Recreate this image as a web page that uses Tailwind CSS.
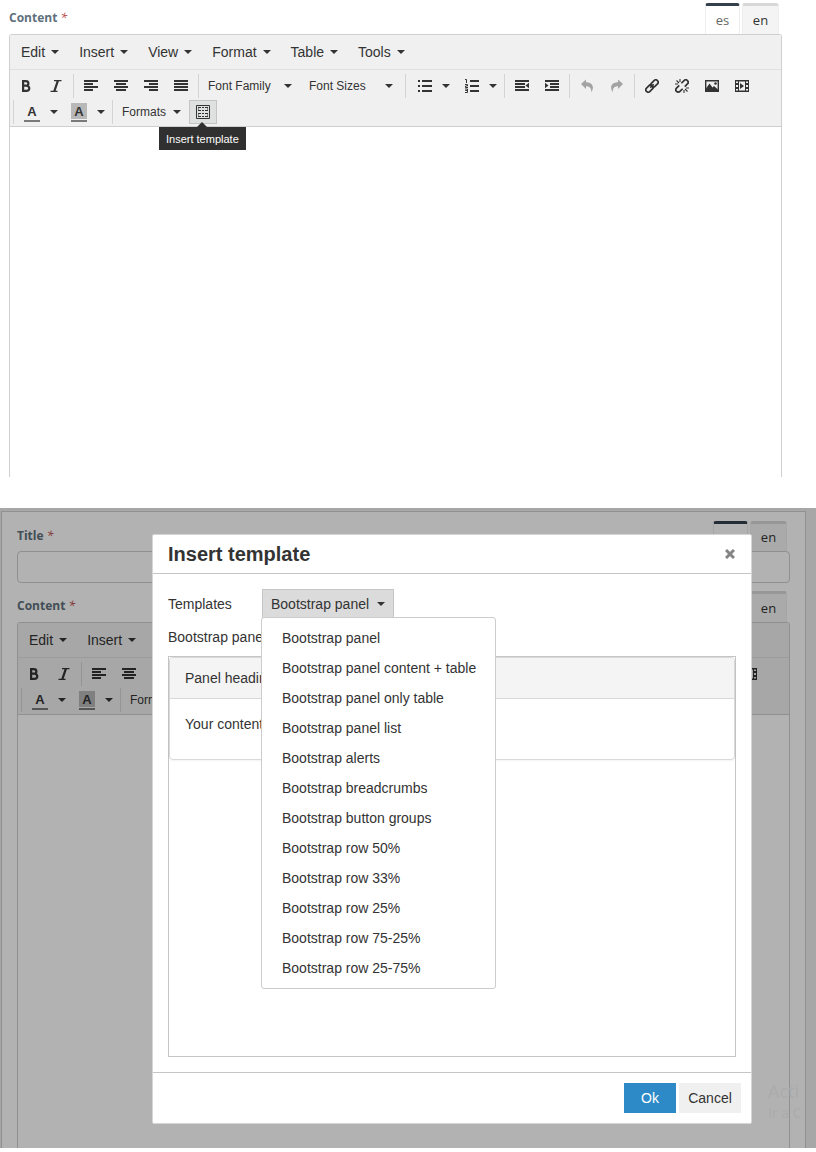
<!DOCTYPE html>
<html lang="en">
<head>
<meta charset="utf-8">
<meta name="viewport" content="width=device-width, initial-scale=1">
<title>Insert template</title>
<script src="https://cdn.jsdelivr.net/npm/@tailwindcss/browser@4"></script>
</head>
<body class="bg-white font-['Liberation_Sans',Arial,sans-serif] text-sm text-[#333333]">

<svg class="hidden" aria-hidden="true">
  <symbol id="caret" viewBox="0 0 8 4"><path d="M0 0h8L4 4z" fill="currentColor"/></symbol>
  <symbol id="bold" viewBox="0 0 14 14"><path fill="none" stroke="currentColor" stroke-width="2.2" d="M4.1 2.1h2.6c3.6 0 3.6 4.600 0 4.600H4.100h3.200c4 0 4 5.200 0 5.200H4.100z"/></symbol>
  <symbol id="italic" viewBox="0 0 14 14"><path fill="none" stroke="currentColor" stroke-width="1.300" d="M5 1.700h7.500M1.500 12.300h7"/><path fill="none" stroke="currentColor" stroke-width="2.200" d="M8.900 1.700 5.300 12.300"/></symbol>
  <symbol id="left" viewBox="0 0 14 14"><path fill="currentColor" d="M0 1h14v2H0zM0 4h9v2H0zM0 7h14v2H0zM0 10h9v2H0z"/></symbol>
  <symbol id="center" viewBox="0 0 14 14"><path fill="currentColor" d="M0 1h14v2H0zM2 4h10v2H2zM0 7h14v2H0zM2 10h10v2H2z"/></symbol>
  <symbol id="right" viewBox="0 0 14 14"><path fill="currentColor" d="M0 1h14v2H0zM5 4h9v2H5zM0 7h14v2H0zM5 10h9v2H5z"/></symbol>
  <symbol id="justify" viewBox="0 0 14 14"><path fill="currentColor" d="M0 1h14v2H0zM0 4h14v2H0zM0 7h14v2H0zM0 10h14v2H0z"/></symbol>
  <symbol id="bullets" viewBox="0 0 14 14"><path fill="currentColor" d="M0 1h2v2H0zM4 1h10v2H4zM0 6h2v2H0zM4 6h10v2H4zM0 11h2v2H0zM4 11h10v2H4z"/></symbol>
  <symbol id="numbers" viewBox="0 0 14 14"><path fill="currentColor" d="M5 1h9v2H5zM5 6h9v2H5zM5 11h9v2H5z"/><path fill="none" stroke="currentColor" d="M0 .5h1.500v3.500M0 5.500h2.500v1.500h-2v1.500H3M0 10h2.500v1.500H.5h2v2H0"/></symbol>
  <symbol id="outdent" viewBox="0 0 14 14"><path fill="currentColor" d="M0 1h14v2H0zM0 4h10v2H0zM0 7h10v2H0zM0 10h14v2H0zM14 3.700v5.600L10.500 6.500z"/></symbol>
  <symbol id="indent" viewBox="0 0 14 14"><path fill="currentColor" d="M0 1h14v2H0zM5 4h9v2H5zM5 7h9v2H5zM0 10h14v2H0zM0 3.700v5.600L3.500 6.500z"/></symbol>
  <symbol id="undo" viewBox="0 0 14 14"><path fill="currentColor" d="M1 5 6 .5v2.700c6 0 9 4.300 5.300 10.300C11.500 9.500 10 7.400 6 7.300v2.700z"/></symbol>
  <symbol id="redo" viewBox="0 0 14 14"><path fill="currentColor" d="M13 5 8 .5v2.700c-6 0-9 4.300-5.300 10.300C2.500 9.500 4 7.400 8 7.300v2.700z"/></symbol>
  <symbol id="link" viewBox="0 0 14 14"><g fill="none" stroke="currentColor" stroke-width="1.700" transform="rotate(-45 7 7)"><rect x="-.7" y="4.600" width="8.300" height="4.800" rx="2.400"/><rect x="6.400" y="4.600" width="8.300" height="4.800" rx="2.400"/><path d="M4.500 7h5" stroke-width="1.300"/></g></symbol>
  <symbol id="unlink" viewBox="0 0 14 14"><g fill="none" stroke="currentColor" stroke-width="1.700"><path transform="rotate(-45 7 7)" d="M5.500 9.400H1.700a2.400 2.400 0 0 1 0-4.800h3.800M8.500 4.600h3.800a2.400 2.400 0 0 1 0 4.800H8.500"/><path stroke-width="1.100" d="M5 0v3M1.500 1.500l2.500 2.500M0 5h3M9 11v3M12.500 12.500 10 10M11 9h3"/></g></symbol>
  <symbol id="image" viewBox="0 0 14 14"><path fill="none" stroke="currentColor" stroke-width="1.400" d="M.7 1.700h12.600v10.600H.7z"/><path fill="currentColor" d="M1 12V9.500l3.500-5 3 4L9 7l4 3.500V12z"/><circle cx="10.500" cy="4.500" r="1.300" fill="currentColor"/></symbol>
  <symbol id="media" viewBox="0 0 14 14"><path fill="currentColor" fill-rule="evenodd" d="M0 1h14v12H0zM1 2.500v1.500h2V2.500zM1 6v2h2V6zM1 10v1.500h2V10zM11 2.500v1.500h2V2.500zM11 6v2h2V6zM11 10v1.500h2V10zM4 2.500v9h6v-9z"/><path fill="currentColor" d="M5 4v6l4-3z"/></symbol>
  <symbol id="template" viewBox="0 0 14 14"><path fill="none" stroke="currentColor" d="M.5.500h13v13H.5z"/><path fill="none" stroke="currentColor" stroke-dasharray="2 1" d="M3 2.500h8M3 5.500h8M3 8.500h8M3 11.500h8"/><path stroke="currentColor" d="M2.500 2v1.500M2.500 4.500v1.500M11.500 2v1.500M11.500 4.500v1.500M2.500 8v1.500M2.500 10.500v1.500M11.500 8v1.500M11.500 10.500v1.500"/></symbol>
  <symbol id="close" viewBox="0 0 10 10"><path stroke="currentColor" stroke-width="3" d="M1 1l8 8M9 1 1 9"/></symbol>
</svg>

<section class="flex h-[477px] flex-col overflow-hidden pt-[3px] pr-[34px] pl-[9px]">
  <div class="flex h-[31px] shrink-0 items-start justify-between font-['Open_Sans',sans-serif] text-[13px]">
    <span class="pt-[5px] text-xs leading-5 font-bold text-[#60707c]">Content <em class="font-normal text-[#b94a48]">*</em></span>
    <div class="flex gap-[2px] pr-[3px]" role="tablist">
      <button role="tab" aria-selected="true" class="h-[31px] w-[35px] rounded-t-[3px] border-x border-t-[3px] border-x-[#eeeeee] border-t-[#343f4c] bg-white text-[#666666]">es</button>
      <button role="tab" aria-selected="false" class="h-[31px] w-[37px] rounded-t-[3px] border-x border-t-[3px] border-x-[#eeeeee] border-t-[#d8d8d8] bg-[#f4f4f4]">en</button>
    </div>
  </div>
  <div class="flex grow flex-col rounded-t-[3px] border border-b-0 border-[#cfcfcf]">
    <div class="border-b border-[#cfcfcf] bg-[#f0f0f0]">
      <div class="flex h-[35px] items-center border-b border-[#e0e0e0] px-px" role="menubar">
        <button role="menuitem" class="flex items-center gap-[6px] px-[10px]">Edit<svg class="h-1 w-2"><use href="#caret"/></svg></button>
        <button role="menuitem" class="flex items-center gap-[6px] px-[10px]">Insert<svg class="h-1 w-2"><use href="#caret"/></svg></button>
        <button role="menuitem" class="flex items-center gap-[6px] px-[10px]">View<svg class="h-1 w-2"><use href="#caret"/></svg></button>
        <button role="menuitem" class="flex items-center gap-[6px] px-[10px]">Format<svg class="h-1 w-2"><use href="#caret"/></svg></button>
        <button role="menuitem" class="flex items-center gap-[6px] px-[10px]">Table<svg class="h-1 w-2"><use href="#caret"/></svg></button>
        <button role="menuitem" class="flex items-center gap-[6px] px-[10px]">Tools<svg class="h-1 w-2"><use href="#caret"/></svg></button>
      </div>
      <div class="flex flex-wrap gap-y-[2px] px-px pt-1 pb-[2px] text-xs" role="toolbar" aria-label="Formatting">
        <div class="flex h-6">
          <button aria-label="Bold" class="grid w-[30px] place-items-center"><svg class="size-[14px]"><use href="#bold"/></svg></button>
          <button aria-label="Italic" class="grid w-[30px] place-items-center"><svg class="size-[14px]"><use href="#italic"/></svg></button>
        </div>
        <div class="ml-[2px] flex h-6 border-l border-[#d4d4d4] pl-[2px]">
          <button aria-label="Align left" class="grid w-[30px] place-items-center"><svg class="size-[14px]"><use href="#left"/></svg></button>
          <button aria-label="Align center" class="grid w-[30px] place-items-center"><svg class="size-[14px]"><use href="#center"/></svg></button>
          <button aria-label="Align right" class="grid w-[30px] place-items-center"><svg class="size-[14px]"><use href="#right"/></svg></button>
          <button aria-label="Justify" class="grid w-[30px] place-items-center"><svg class="size-[14px]"><use href="#justify"/></svg></button>
        </div>
        <div class="ml-[2px] flex h-6 border-l border-[#d4d4d4] pl-[2px]">
          <button class="flex w-[101px] items-center justify-between pr-[10px] pl-[7px]">Font Family<svg class="h-1 w-2"><use href="#caret"/></svg></button>
          <button class="flex w-[101px] items-center justify-between pr-[10px] pl-[7px]">Font Sizes<svg class="h-1 w-2"><use href="#caret"/></svg></button>
        </div>
        <div class="ml-[2px] flex h-6 border-l border-[#d4d4d4] pl-[2px]">
          <button aria-label="Bullet list" class="flex w-[47px] items-center gap-[10px] pl-[10px]"><svg class="size-[14px]"><use href="#bullets"/></svg><svg class="h-1 w-2"><use href="#caret"/></svg></button>
          <button aria-label="Numbered list" class="flex w-[47px] items-center gap-[10px] pl-[10px]"><svg class="size-[14px]"><use href="#numbers"/></svg><svg class="h-1 w-2"><use href="#caret"/></svg></button>
        </div>
        <div class="ml-[2px] flex h-6 border-l border-[#d4d4d4] pl-[2px]">
          <button aria-label="Decrease indent" class="grid w-[30px] place-items-center"><svg class="size-[14px]"><use href="#outdent"/></svg></button>
          <button aria-label="Increase indent" class="grid w-[30px] place-items-center"><svg class="size-[14px]"><use href="#indent"/></svg></button>
        </div>
        <div class="ml-[2px] flex h-6 border-l border-[#d4d4d4] pl-[2px]">
          <button aria-label="Undo" disabled class="grid w-[30px] place-items-center text-[#a3a3a3]"><svg class="size-[14px]"><use href="#undo"/></svg></button>
          <button aria-label="Redo" disabled class="grid w-[30px] place-items-center text-[#a3a3a3]"><svg class="size-[14px]"><use href="#redo"/></svg></button>
        </div>
        <div class="ml-[2px] flex h-6 border-l border-[#d4d4d4] pr-[20px] pl-[2px]">
          <button aria-label="Insert link" class="grid w-[30px] place-items-center"><svg class="size-[14px]"><use href="#link"/></svg></button>
          <button aria-label="Remove link" class="grid w-[30px] place-items-center"><svg class="size-[14px]"><use href="#unlink"/></svg></button>
          <button aria-label="Insert image" class="grid w-[30px] place-items-center"><svg class="size-[14px]"><use href="#image"/></svg></button>
          <button aria-label="Insert video" class="grid w-[30px] place-items-center"><svg class="size-[14px]"><use href="#media"/></svg></button>
        </div>
        <div class="ml-[2px] flex h-6 border-l border-[#d4d4d4] pl-[2px]">
          <button aria-label="Text color" class="flex w-[47px] items-center gap-[10px] pl-2"><span class="flex h-[19px] w-4 flex-col justify-between text-center text-[13px] leading-[18px] font-bold"><span class="h-[17px]">A</span><span class="h-[2px] bg-[#7a7a7a]"></span></span><svg class="h-1 w-2"><use href="#caret"/></svg></button>
          <button aria-label="Background color" class="flex w-[47px] items-center gap-[10px] pl-2"><span class="flex h-[19px] w-4 flex-col justify-between text-center text-[13px] leading-[18px] font-bold"><span class="h-4 bg-[#b8b8b8]">A</span><span class="h-[2px] bg-[#7a7a7a]"></span></span><svg class="h-1 w-2"><use href="#caret"/></svg></button>
        </div>
        <div class="ml-[2px] flex h-6 border-l border-[#d4d4d4] pl-[2px]">
          <button class="flex w-[73px] items-center justify-between px-[7px]">Formats<svg class="h-1 w-2"><use href="#caret"/></svg></button>
          <div class="relative ml-px">
            <button aria-label="Insert template" aria-describedby="tip" class="grid h-6 w-7 place-items-center border border-[#c4c4c4] bg-[#dfe1e1]"><svg class="size-[14px]"><use href="#template"/></svg></button>
            <span id="tip" role="tooltip" class="absolute top-[27px] left-[-30px] h-[23px] bg-[#303030] px-[7px] text-[11px] leading-[24px] whitespace-nowrap text-white before:absolute before:-top-[5px] before:left-[38px] before:border-x-[5px] before:border-b-[5px] before:border-x-transparent before:border-b-[#303030] before:content-['']">Insert template</span>
          </div>
        </div>
      </div>
    </div>
    <div class="grow bg-white" contenteditable="true" role="textbox" aria-label="Content"></div>
  </div>
</section>

<section class="relative mt-[31px] flex h-[640px] flex-col overflow-hidden bg-[#f0f0f0] pt-[3px] pr-[10px] pl-px">
  <div class="flex grow flex-col border border-b-0 border-[#d0d0d0] bg-white pt-[9px] pr-[15px] pl-[15px]">
    <div class="flex h-[30px] shrink-0 items-start justify-between font-['Open_Sans',sans-serif] text-[13px]">
      <label for="title" class="pt-[5px] text-xs leading-5 font-bold text-[#60707c]">Title <em class="font-normal text-[#b94a48]">*</em></label>
      <div class="flex gap-[2px] pr-[3px]" role="tablist">
        <button role="tab" aria-selected="true" aria-label="es" class="h-[30px] w-[35px] rounded-t-[3px] border-x border-t-[3px] border-x-[#eeeeee] border-t-[#343f4c] bg-white"></button>
        <button role="tab" aria-selected="false" class="h-[30px] w-[37px] rounded-t-[3px] border-x border-t-[3px] border-x-[#eeeeee] border-t-[#d8d8d8] bg-[#f4f4f4]">en</button>
      </div>
    </div>
    <input id="title" type="text" class="h-8 w-full shrink-0 rounded-[4px] border border-[#cfcfcf] bg-white px-3">
    <div class="mt-2 flex h-[31px] shrink-0 items-start justify-between font-['Open_Sans',sans-serif] text-[13px]">
      <span class="pt-[5px] text-xs leading-5 font-bold text-[#60707c]">Content <em class="font-normal text-[#b94a48]">*</em></span>
      <div class="flex gap-[2px] pr-[3px]" role="tablist">
        <button role="tab" aria-selected="false" class="h-[31px] w-[37px] rounded-t-[3px] border-x border-t-[3px] border-x-[#eeeeee] border-t-[#d8d8d8] bg-[#f4f4f4]">en</button>
      </div>
    </div>
    <div class="flex grow flex-col rounded-t-[3px] border border-b-0 border-[#cfcfcf]">
      <div class="border-b border-[#cfcfcf] bg-[#f0f0f0]">
        <div class="flex h-[35px] items-center border-b border-[#e0e0e0] px-px" role="menubar">
          <button role="menuitem" class="flex items-center gap-[6px] px-[10px]">Edit<svg class="h-1 w-2"><use href="#caret"/></svg></button>
          <button role="menuitem" class="flex items-center gap-[6px] px-[10px]">Insert<svg class="h-1 w-2"><use href="#caret"/></svg></button>
        </div>
        <div class="flex flex-col gap-y-[2px] px-px pt-1 pb-[2px] text-xs" role="toolbar" aria-label="Formatting">
          <div class="flex">
            <div class="flex h-6">
              <button aria-label="Bold" class="grid w-[30px] place-items-center"><svg class="size-[14px]"><use href="#bold"/></svg></button>
              <button aria-label="Italic" class="grid w-[30px] place-items-center"><svg class="size-[14px]"><use href="#italic"/></svg></button>
            </div>
            <div class="ml-[2px] flex h-6 border-l border-[#d4d4d4] pl-[2px]">
              <button aria-label="Align left" class="grid w-[30px] place-items-center"><svg class="size-[14px]"><use href="#left"/></svg></button>
              <button aria-label="Align center" class="grid w-[30px] place-items-center"><svg class="size-[14px]"><use href="#center"/></svg></button>
            </div>
            <button aria-label="Insert video" class="mr-[23px] ml-auto grid h-6 w-[30px] place-items-center"><svg class="size-[14px]"><use href="#media"/></svg></button>
          </div>
          <div class="flex">
            <div class="ml-[2px] flex h-6 border-l border-[#d4d4d4] pl-[2px]">
              <button aria-label="Text color" class="flex w-[47px] items-center gap-[10px] pl-2"><span class="flex h-[19px] w-4 flex-col justify-between text-center text-[13px] leading-[18px] font-bold"><span class="h-[17px]">A</span><span class="h-[2px] bg-[#7a7a7a]"></span></span><svg class="h-1 w-2"><use href="#caret"/></svg></button>
              <button aria-label="Background color" class="flex w-[47px] items-center gap-[10px] pl-2"><span class="flex h-[19px] w-4 flex-col justify-between text-center text-[13px] leading-[18px] font-bold"><span class="h-4 bg-[#b8b8b8]">A</span><span class="h-[2px] bg-[#7a7a7a]"></span></span><svg class="h-1 w-2"><use href="#caret"/></svg></button>
            </div>
            <div class="ml-[2px] flex h-6 border-l border-[#d4d4d4] pl-[2px]">
              <button class="flex w-[73px] items-center justify-between px-[7px]">Formats<svg class="h-1 w-2"><use href="#caret"/></svg></button>
            </div>
          </div>
        </div>
      </div>
      <div class="grow bg-white" contenteditable="true" role="textbox" aria-label="Content"></div>
    </div>
  </div>

  <div class="absolute inset-0 bg-black/30"></div>
  <div class="absolute right-[2px] bottom-[25px] w-[46px] font-['Open_Sans',sans-serif] whitespace-nowrap text-[#ababab]" aria-hidden="true">
    <p class="text-lg leading-6">Acti</p>
    <p class="text-sm leading-5">Ir a C</p>
  </div>

  <div role="dialog" aria-modal="true" aria-labelledby="dialog-title" class="absolute top-[26px] right-[64px] left-[152px] flex h-[590px] flex-col rounded-[2px] border border-[#d5d5d5] bg-white">
    <header class="flex h-[39px] shrink-0 items-center justify-between border-b border-[#c5c5c5] pr-4 pl-[15px]">
      <h1 id="dialog-title" class="text-xl font-bold">Insert template</h1>
      <button aria-label="Close" class="text-[#858585]"><svg class="size-[10px]"><use href="#close"/></svg></button>
    </header>
    <div class="flex grow flex-col px-[15px] py-[15px]">
      <div class="flex h-[30px] items-center">
        <span id="templates" class="w-[94px]">Templates</span>
        <div class="relative">
          <button aria-haspopup="menu" aria-expanded="true" class="flex h-[30px] w-[132px] items-center justify-between border border-[#c5c5c5] bg-[#dbdbdb] px-2">Bootstrap panel<svg class="h-1 w-2"><use href="#caret"/></svg></button>
          <ul role="menu" aria-labelledby="templates" class="absolute top-[28px] -left-px w-[235px] rounded-[3px] border border-[#cccccc] bg-white py-[5px] leading-[30px] whitespace-nowrap">
            <li><button role="menuitem" class="w-full pl-5 text-left">Bootstrap panel</button></li>
            <li><button role="menuitem" class="w-full pl-5 text-left">Bootstrap panel content + table</button></li>
            <li><button role="menuitem" class="w-full pl-5 text-left">Bootstrap panel only table</button></li>
            <li><button role="menuitem" class="w-full pl-5 text-left">Bootstrap panel list</button></li>
            <li><button role="menuitem" class="w-full pl-5 text-left">Bootstrap alerts</button></li>
            <li><button role="menuitem" class="w-full pl-5 text-left">Bootstrap breadcrumbs</button></li>
            <li><button role="menuitem" class="w-full pl-5 text-left">Bootstrap button groups</button></li>
            <li><button role="menuitem" class="w-full pl-5 text-left">Bootstrap row 50%</button></li>
            <li><button role="menuitem" class="w-full pl-5 text-left">Bootstrap row 33%</button></li>
            <li><button role="menuitem" class="w-full pl-5 text-left">Bootstrap row 25%</button></li>
            <li><button role="menuitem" class="w-full pl-5 text-left">Bootstrap row 75-25%</button></li>
            <li><button role="menuitem" class="w-full pl-5 text-left">Bootstrap row 25-75%</button></li>
          </ul>
        </div>
      </div>
      <p class="pt-2 pb-[9px] leading-5">Bootstrap panel</p>
      <div class="grow border border-[#c5c5c5]">
        <div class="rounded-[4px] border border-[#d9d9d9] shadow-xs">
          <div class="rounded-t-[3px] border-b border-[#d9d9d9] bg-[#f4f4f4] px-[15px] py-[10px] leading-5">Panel heading</div>
          <div class="h-[60px] px-[15px] py-[15px] leading-5">Your content</div>
        </div>
      </div>
    </div>
    <footer class="flex h-[51px] shrink-0 items-center justify-end gap-[3px] border-t border-[#c5c5c5] pr-[10px]">
      <button class="h-[30px] w-[52px] bg-[#2d8ac7] text-white">Ok</button>
      <button class="h-[30px] w-[62px] bg-[#f0f0f0]">Cancel</button>
    </footer>
  </div>
</section>
</body>
</html>
